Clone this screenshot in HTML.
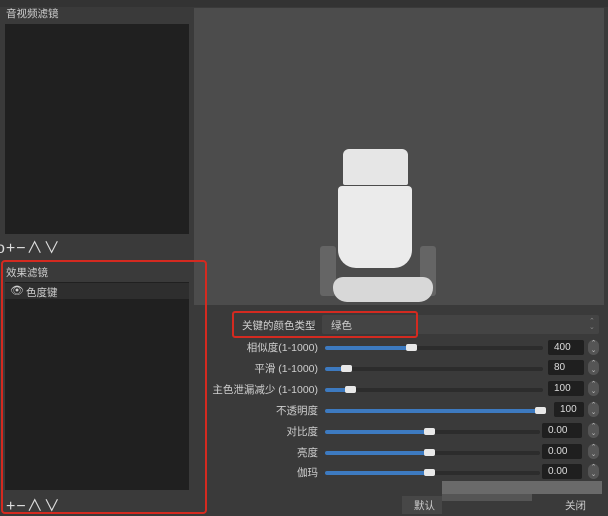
<!DOCTYPE html><html><head><meta charset="utf-8"><style>
body{margin:0;width:608px;height:514px;background:#3a3a3a;position:relative;overflow:hidden;font-family:"Liberation Sans","Noto Sans CJK SC",sans-serif;color:#cfcfcf;font-size:10px}
.a{position:absolute}
.lbl{position:absolute;text-align:right;white-space:nowrap;font-size:10.5px}
.tr{position:absolute;height:4px;background:#2c2c2c;border-radius:2px}
.fi{position:absolute;height:4px;background:#3d7ac0;border-radius:2px}
.hd{position:absolute;width:11px;height:7px;background:#e8e8e8;border-radius:2px}
.vb{position:absolute;height:15px;background:#1f1f1f;border-radius:2px;font-size:10px;line-height:15px;padding-left:6px;box-sizing:border-box;color:#ddd}
.sp{position:absolute;width:11px;height:15px;border-radius:6px;background:#555;color:#bbb;font-size:7px;line-height:7px;text-align:center}
</style></head><body>
<div class="a" style="left:0;top:0;width:608px;height:7px;background:#333"></div>
<div class="a" style="left:6px;top:6px;font-size:10.5px">音视频滤镜</div>
<div class="a" style="left:5px;top:24px;width:184px;height:210px;background:#202020"></div>
<div class="a" style="left:-4px;top:234px;font-size:16px;color:#ddd;letter-spacing:1px">o+−∧∨</div>
<div class="a" style="left:194px;top:8px;width:410px;height:297px;background:#4c4c4c"></div>
<!-- chair -->
<div class="a" style="left:320px;top:246px;width:16px;height:50px;background:#777;opacity:.6;border-radius:3px"></div>
<div class="a" style="left:420px;top:246px;width:16px;height:50px;background:#777;opacity:.6;border-radius:3px"></div>
<div class="a" style="left:343px;top:149px;width:65px;height:36px;background:#e6e6e6;border-radius:6px 6px 2px 2px"></div>
<div class="a" style="left:338px;top:186px;width:74px;height:82px;background:#ebebeb;border-radius:4px 4px 18px 18px"></div>
<div class="a" style="left:333px;top:277px;width:100px;height:25px;background:#d8d8d8;border-radius:10px 10px 14px 14px"></div>
<!-- effects filter -->
<div class="a" style="left:1px;top:260px;width:202px;height:250px;border:2px solid #d42a20;border-radius:4px"></div>
<div class="a" style="left:6px;top:265px;font-size:10.5px">效果滤镜</div>
<div class="a" style="left:5px;top:282px;width:184px;height:208px;background:#202020"></div>
<div class="a" style="left:5px;top:283px;width:184px;height:16px;background:#2e2e2e"></div>
<div class="a" style="left:10px;top:284px;font-size:11px">👁</div>
<div class="a" style="left:26px;top:285px;font-size:10.5px">色度键</div>
<div class="a" style="left:6px;top:492px;font-size:16px;color:#ddd;letter-spacing:1px">+−∧∨</div>
<!-- key color -->
<div class="a" style="left:322px;top:315px;width:277px;height:19px;background:#444;border-radius:2px"></div>
<div class="a" style="left:589px;top:319px;font-size:7px;color:#888;line-height:6px">⌃<br>⌄</div>
<div class="a" style="left:232px;top:311px;width:182px;height:23px;border:2px solid #d42a20;border-radius:3px"></div>
<div class="lbl" style="left:242px;top:318px">关键的颜色类型</div>
<div class="lbl" style="left:331px;top:318px">绿色</div>

<div class="lbl" style="right:290px;top:340px">相似度(1-1000)</div>
<div class="tr" style="left:325px;top:346px;width:218px"></div><div class="fi" style="left:325px;top:346px;width:86px"></div><div class="hd" style="left:406px;top:344px"></div>
<div class="vb" style="left:548px;top:340px;width:36px">400</div><div class="sp" style="left:588px;top:340px">⌃<br>⌄</div>

<div class="lbl" style="right:290px;top:361px">平滑 (1-1000)</div>
<div class="tr" style="left:325px;top:367px;width:218px"></div><div class="fi" style="left:325px;top:367px;width:20px"></div><div class="hd" style="left:341px;top:365px"></div>
<div class="vb" style="left:548px;top:360px;width:36px">80</div><div class="sp" style="left:588px;top:360px">⌃<br>⌄</div>

<div class="lbl" style="right:290px;top:382px">主色泄漏减少 (1-1000)</div>
<div class="tr" style="left:325px;top:388px;width:218px"></div><div class="fi" style="left:325px;top:388px;width:24px"></div><div class="hd" style="left:345px;top:386px"></div>
<div class="vb" style="left:548px;top:381px;width:36px">100</div><div class="sp" style="left:588px;top:381px">⌃<br>⌄</div>

<div class="lbl" style="right:290px;top:403px">不透明度</div>
<div class="fi" style="left:325px;top:409px;width:218px"></div><div class="hd" style="left:535px;top:407px"></div>
<div class="vb" style="left:554px;top:402px;width:30px">100</div><div class="sp" style="left:588px;top:402px">⌃<br>⌄</div>

<div class="lbl" style="right:290px;top:424px">对比度</div>
<div class="tr" style="left:325px;top:430px;width:215px"></div><div class="fi" style="left:325px;top:430px;width:105px"></div><div class="hd" style="left:424px;top:428px"></div>
<div class="vb" style="left:542px;top:423px;width:40px">0.00</div><div class="sp" style="left:588px;top:423px">⌃<br>⌄</div>

<div class="lbl" style="right:290px;top:445px">亮度</div>
<div class="tr" style="left:325px;top:451px;width:215px"></div><div class="fi" style="left:325px;top:451px;width:105px"></div><div class="hd" style="left:424px;top:449px"></div>
<div class="vb" style="left:542px;top:444px;width:40px">0.00</div><div class="sp" style="left:588px;top:444px">⌃<br>⌄</div>

<div class="lbl" style="right:290px;top:465px">伽玛</div>
<div class="tr" style="left:325px;top:471px;width:215px"></div><div class="fi" style="left:325px;top:471px;width:105px"></div><div class="hd" style="left:424px;top:469px"></div>
<div class="vb" style="left:542px;top:464px;width:40px">0.00</div><div class="sp" style="left:588px;top:464px">⌃<br>⌄</div>

<!-- pixelated blur -->
<div class="a" style="left:442px;top:481px;width:160px;height:13px;background:#6a6a6a"></div>
<div class="a" style="left:442px;top:494px;width:90px;height:7px;background:#555"></div>
<div class="a" style="left:402px;top:496px;width:40px;height:18px;background:#474747"></div>
<div class="a" style="left:414px;top:498px;font-size:10.5px;color:#ccc">默认</div>
<div class="a" style="left:565px;top:498px;font-size:10.5px;color:#ccc">关闭</div>
</body></html>
